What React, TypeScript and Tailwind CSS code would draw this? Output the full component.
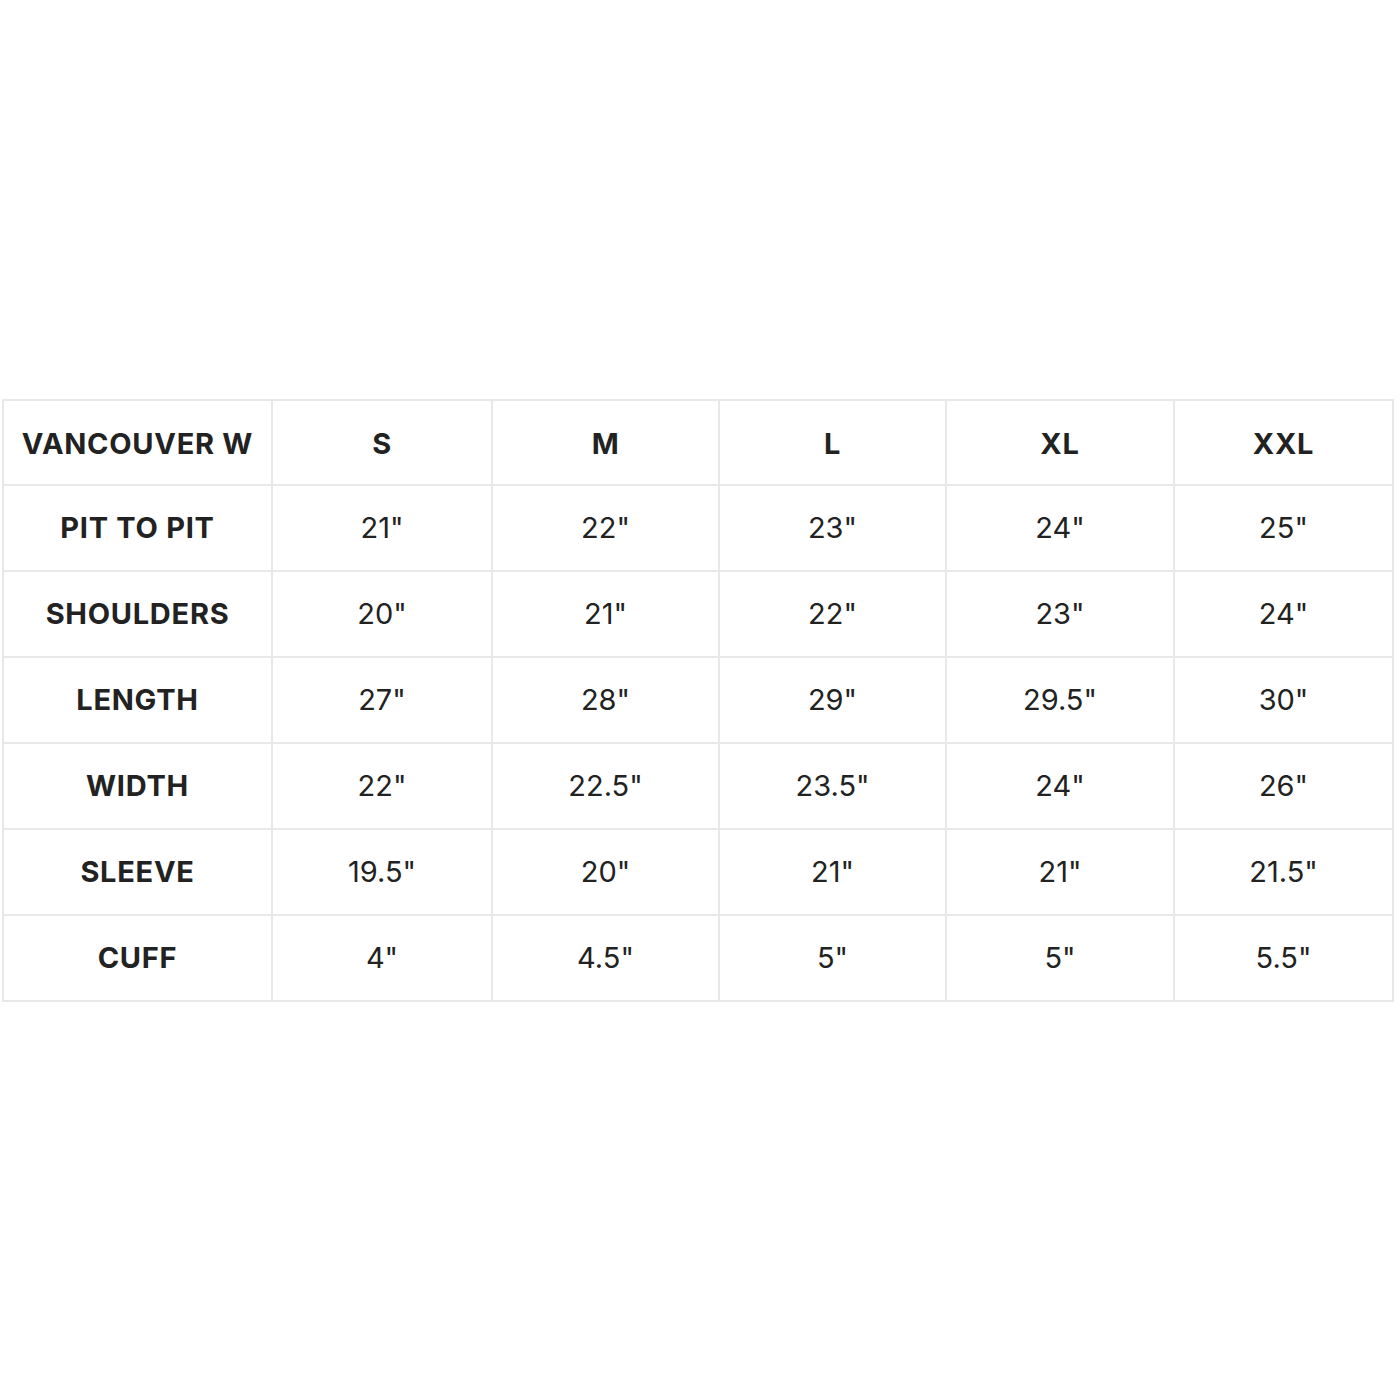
const sizes = ["S", "M", "L", "XL", "XXL"]

const rows: { label: string; values: string[] }[] = [
  { label: "PIT TO PIT", values: ['21"', '22"', '23"', '24"', '25"'] },
  { label: "SHOULDERS", values: ['20"', '21"', '22"', '23"', '24"'] },
  { label: "LENGTH", values: ['27"', '28"', '29"', '29.5"', '30"'] },
  { label: "WIDTH", values: ['22"', '22.5"', '23.5"', '24"', '26"'] },
  { label: "SLEEVE", values: ['19.5"', '20"', '21"', '21"', '21.5"'] },
  { label: "CUFF", values: ['4"', '4.5"', '5"', '5"', '5.5"'] },
]

const colWidths = ["w-[269px]", "w-[220px]", "w-[227px]", "w-[227px]", "w-[228px]", "w-[219px]"]

export default function App() {
  return (
    <div className="min-h-[1400px] bg-white flex items-center font-['Inter','Liberation_Sans',sans-serif] text-[#222]">
      <table className="ml-[2px] w-[1390px] table-fixed border-collapse border-2 border-[#e8e8e8]">
        <colgroup>
          {colWidths.map((w, i) => (
            <col key={i} className={w} />
          ))}
        </colgroup>
        <thead>
          <tr className="h-[85px]">
            <th className="border-2 border-[#e8e8e8] text-[29px] font-bold tracking-[0.025em] text-center pt-[3px]">
              VANCOUVER W
            </th>
            {sizes.map((s) => (
              <th key={s} className="border-2 border-[#e8e8e8] text-[29px] font-bold tracking-[0.025em] text-center pt-[3px]">
                {s}
              </th>
            ))}
          </tr>
        </thead>
        <tbody>
          {rows.map((row) => (
            <tr key={row.label} className="h-[86px]">
              <td className="border-2 border-[#e8e8e8] text-[29px] font-bold tracking-[0.025em] text-center">{row.label}</td>
              {row.values.map((v, i) => (
                <td key={i} className="border-2 border-[#e8e8e8] text-[29px] font-normal text-center">
                  {v}
                </td>
              ))}
            </tr>
          ))}
        </tbody>
      </table>
    </div>
  )
}
